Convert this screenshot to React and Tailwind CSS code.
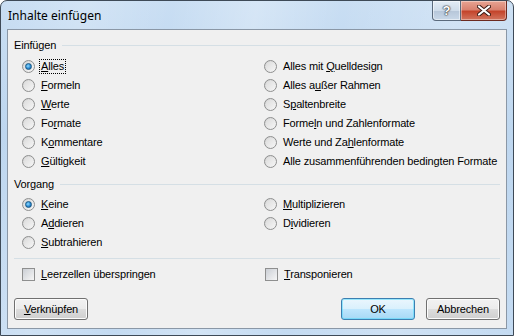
import React from "react";

const font = { fontFamily: '"Liberation Sans", Arial, sans-serif' };

function Radio({ checked }) {
  return (
    <span className="relative flex h-[13px] w-[13px] shrink-0 items-center justify-center rounded-full border border-[#8e8f8f] bg-[linear-gradient(135deg,#d2d2d2,#f8f8f8)]">
      <span className="h-[9px] w-[9px] rounded-full bg-[linear-gradient(135deg,#dcdcdc,#f4f4f4)]" />
      {checked && (
        <span className="absolute h-[7px] w-[7px] rounded-full border border-[#1a5a86] bg-[radial-gradient(circle_at_40%_40%,#8fdcff,#2a8ad4_55%,#11497a)]" />
      )}
    </span>
  );
}

function Check() {
  return (
    <span className="flex h-[13px] w-[13px] shrink-0 items-center justify-center border border-[#8e8f8f] bg-white">
      <span className="h-[11px] w-[11px] bg-[linear-gradient(135deg,#cbcfd5,#f6f6f6)]" />
    </span>
  );
}

function Label({ children, focus }) {
  return (
    <span
      className={
        focus
          ? "ml-[4px] border border-dotted border-black px-[1px] leading-[13px] text-black"
          : "ml-[6px] leading-[13px] text-black"
      }
    >
      {children}
    </span>
  );
}

function RadioRow({ checked, focus, children }) {
  return (
    <div className="flex h-[19px] items-center">
      <Radio checked={checked} />
      <Label focus={focus}>{children}</Label>
    </div>
  );
}

function Header({ children }) {
  return (
    <div className="flex h-[16px] items-center pl-[6px] pr-[6px]">
      <span className="text-black">{children}</span>
      <span className="ml-[6px] h-px flex-1 bg-[#d5dfe5]" />
    </div>
  );
}

function Button({ children, def }) {
  return (
    <div
      className={
        "flex h-[22px] w-[74px] items-center justify-center rounded-[3px] border text-black " +
        (def
          ? "border-[#3c7fb1] bg-[linear-gradient(#eaf6fd_0%,#d9f0fc_50%,#bee6fd_51%,#a7d9f5_100%)] shadow-[inset_0_0_0_1px_#48d8fb80]"
          : "border-[#707070] bg-[linear-gradient(#f2f2f2_0%,#ebebeb_50%,#dddddd_51%,#cfcfcf_100%)] shadow-[inset_0_0_0_1px_#fcfcfc]")
      }
    >
      {children}
    </div>
  );
}

export default function App() {
  return (
    <div
      className="relative flex h-[336px] w-[514px] flex-col overflow-hidden rounded-t-[7px] border border-[#3e4a57] bg-[linear-gradient(180deg,#c9def3_0%,#bad4ee_40%,#c4dbf2_100%)] text-[11px] tracking-[-0.15px]"
      style={font}
    >
      {/* glass streaks */}
      <div className="pointer-events-none absolute inset-0 bg-[linear-gradient(100deg,transparent_0%,#ffffff30_15%,transparent_30%,#ffffff40_45%,transparent_60%,#ffffff30_80%,transparent_100%)]" />
      {/* title bar */}
      <div className="relative flex h-[28px] shrink-0 items-start">
        <span className="ml-[7px] mt-[6px] text-[12px] tracking-normal text-black" style={{ fontFamily: '"Noto Sans", "Liberation Sans", sans-serif' }}>
          Inhalte einfügen
        </span>
        <div className="ml-auto mr-[6px] flex h-[20px] items-stretch">
          <div className="flex w-[29px] items-center justify-center rounded-bl-[4px] border border-t-0 border-[#5b6a7c] bg-[linear-gradient(#e3ecf6_0%,#cfdcea_50%,#b6c6d9_51%,#c9d8e8_100%)] shadow-[inset_0_0_0_1px_#ffffff80]">
            <span className="text-[13px] font-bold leading-none text-white [text-shadow:0_0_1px_#333,0_0_1px_#333,0_0_2px_#333]">?</span>
          </div>
          <div className="flex w-[46px] items-center justify-center rounded-br-[4px] border border-l-0 border-t-0 border-[#6b2a20] bg-[linear-gradient(#e8a493_0%,#d98270_45%,#c4452c_55%,#d2755f_100%)] shadow-[inset_0_0_0_1px_#ffffff60]">
            <svg width="14" height="11" viewBox="0 0 14 11">
              <path d="M2 1.5 L12 9.5 M12 1.5 L2 9.5" stroke="#3b1a14" strokeWidth="4" strokeLinecap="round" />
              <path d="M2 1.5 L12 9.5 M12 1.5 L2 9.5" stroke="#ffffff" strokeWidth="2.2" strokeLinecap="round" />
            </svg>
          </div>
        </div>
      </div>
      {/* client */}
      <div className="relative mx-[6px] mb-[6px] flex flex-1 flex-col border border-[#8a97a6] bg-[#f0f0f0] pb-[8px] pt-[7px]">
        <Header>Einfügen</Header>
        <div className="mt-[4px] grid grid-cols-[242px_1fr] pl-[14px]">
          <div className="flex flex-col">
            <RadioRow checked focus>
              <u>A</u>lles
            </RadioRow>
            <RadioRow>
              <u>F</u>ormeln
            </RadioRow>
            <RadioRow>
              <u>W</u>erte
            </RadioRow>
            <RadioRow>
              Fo<u>r</u>mate
            </RadioRow>
            <RadioRow>
              K<u>o</u>mmentare
            </RadioRow>
            <RadioRow>
              <u>G</u>ültigkeit
            </RadioRow>
          </div>
          <div className="flex flex-col">
            <RadioRow>
              Alles mit <u>Q</u>uelldesign
            </RadioRow>
            <RadioRow>
              Alles a<u>u</u>ßer Rahmen
            </RadioRow>
            <RadioRow>
              S<u>p</u>altenbreite
            </RadioRow>
            <RadioRow>
              Forme<u>l</u>n und Zahlenformate
            </RadioRow>
            <RadioRow>
              Werte und Za<u>h</u>lenformate
            </RadioRow>
            <RadioRow>
              Alle zusammenführenden bedin<u>g</u>ten Formate
            </RadioRow>
          </div>
        </div>
        <div className="mt-[5px]">
          <Header>Vorgang</Header>
        </div>
        <div className="mt-[3px] grid grid-cols-[242px_1fr] pl-[14px]">
          <div className="flex flex-col">
            <RadioRow checked>
              <u>K</u>eine
            </RadioRow>
            <RadioRow>
              A<u>d</u>dieren
            </RadioRow>
            <RadioRow>
              <u>S</u>ubtrahieren
            </RadioRow>
          </div>
          <div className="flex flex-col">
            <RadioRow>
              <u>M</u>ultiplizieren
            </RadioRow>
            <RadioRow>
              D<u>i</u>vidieren
            </RadioRow>
          </div>
        </div>
        <div className="mx-[6px] mt-[6px] h-px bg-[#d5dfe5]" />
        <div className="mt-[6px] grid grid-cols-[243px_1fr] pl-[14px]">
          <div className="flex h-[19px] items-center">
            <Check />
            <Label>
              <u>L</u>eerzellen überspringen
            </Label>
          </div>
          <div className="flex h-[19px] items-center">
            <Check />
            <Label>
              <u>T</u>ransponieren
            </Label>
          </div>
        </div>
        <div className="mt-auto flex items-center px-[6px]">
          <Button>
            <span>
              <u>V</u>erknüpfen
            </span>
          </Button>
          <div className="ml-auto flex gap-[11px]">
            <Button def>OK</Button>
            <Button>Abbrechen</Button>
          </div>
        </div>
      </div>
    </div>
  );
}
